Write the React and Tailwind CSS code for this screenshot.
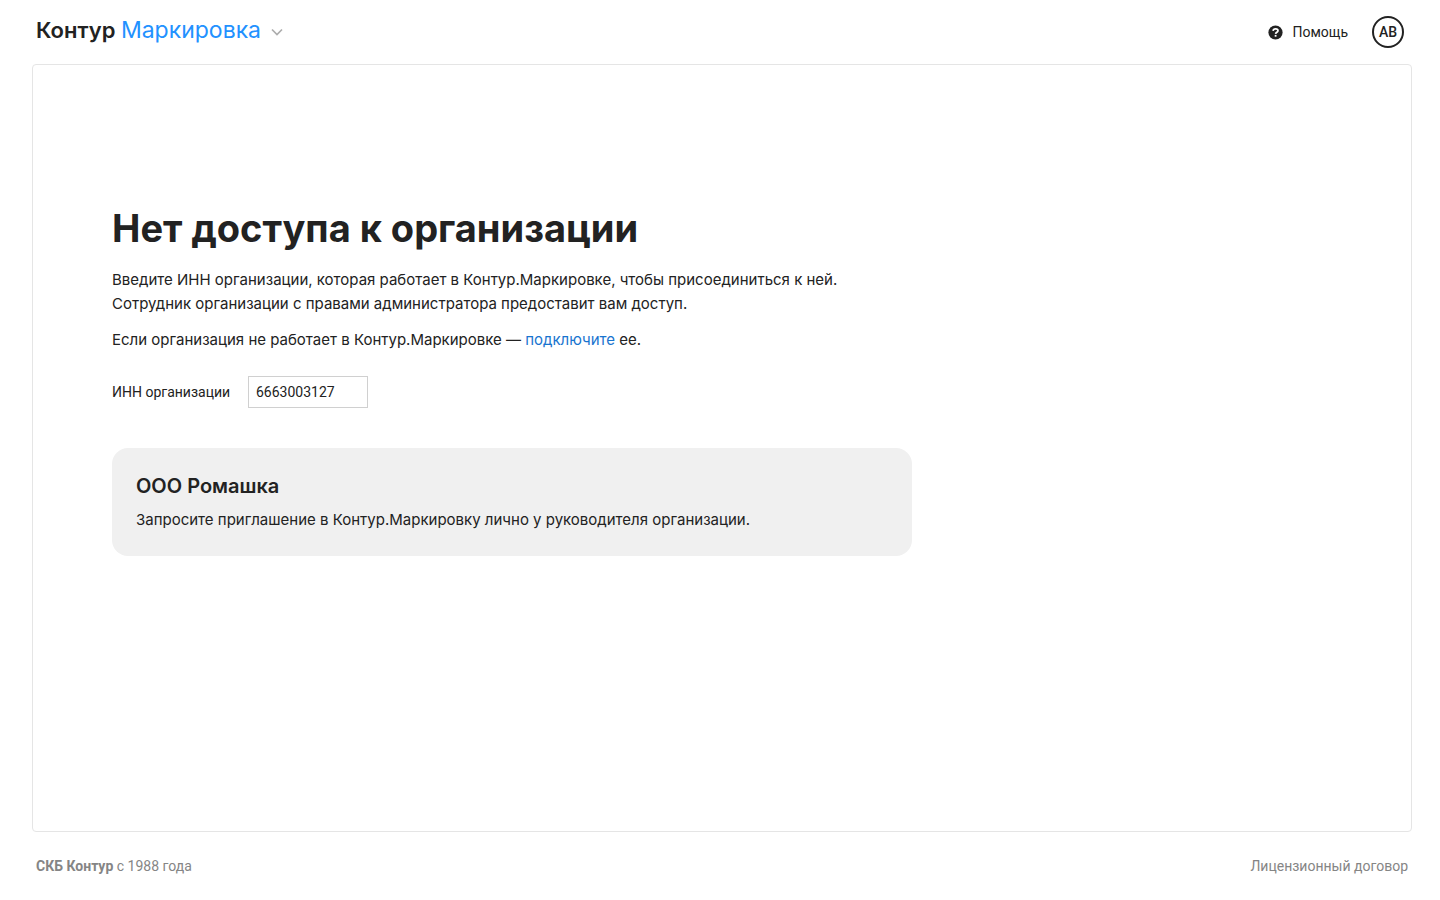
import React, { useState } from 'react';

const Logo = () => (
  <button type="button" className="flex items-center gap-2.5 cursor-pointer">
    <span className="pb-1 font-['Inter',sans-serif] text-[23px] leading-8 whitespace-nowrap text-[#222222]">
      <span className="text-[22px] font-semibold">Контур </span>
      <span className="text-[#2291ff]">Маркировка</span>
    </span>
    <svg className="h-3 w-3" viewBox="0 0 12 12" fill="none" aria-hidden="true">
      <path d="M1 3.5 L6 8.5 L11 3.5" stroke="#adadad" strokeWidth="1.7" />
    </svg>
  </button>
);

const HelpIcon = () => (
  <svg className="h-4 w-4" viewBox="0 0 16 16" fill="none" aria-hidden="true">
    <circle cx="7.5" cy="8.5" r="7.1" fill="#222222" />
    <path
      d="M5.1 6.9 C5.2 5.5 6.2 4.8 7.6 4.8 C9 4.8 10 5.6 10 6.7 C10 8.2 7.7 8.2 7.6 9.9"
      stroke="#ffffff"
      strokeWidth="1.7"
    />
    <rect x="6.7" y="10.9" width="1.8" height="1.8" fill="#ffffff" />
  </svg>
);

const Header = () => (
  <header className="flex h-16 items-center justify-between pl-1 pr-2">
    <Logo />
    <div className="flex items-center gap-6">
      <button type="button" className="flex items-center gap-2 text-sm cursor-pointer">
        <HelpIcon />
        Помощь
      </button>
      <button
        type="button"
        className="flex h-8 w-8 items-center justify-center rounded-full border-2 border-[#222222] text-sm font-medium cursor-pointer"
      >
        АВ
      </button>
    </div>
  </header>
);

const Footer = () => (
  <footer className="flex items-center justify-between px-1 py-6 text-sm text-[#858585]">
    <div>
      <span className="font-bold">СКБ Контур</span> с 1988 года
    </div>
    <a href="#license">Лицензионный договор</a>
  </footer>
);

const App = () => {
  const [inn, setInn] = useState('6663003127');

  return (
    <div className="flex min-h-screen flex-col bg-white pl-8 pr-7 font-['Roboto',sans-serif] text-[#222222]">
      <Header />

      <main className="flex-1 rounded border border-[#e5e5e5] px-[79px] py-[139px]">
        <h1 className="font-['Inter',sans-serif] text-[38px] leading-[48px] font-bold">
          Нет доступа к организации
        </h1>

        <div className="mt-4 space-y-3 font-['Inter',sans-serif] text-[15px] leading-6">
          <p>
            Введите ИНН организации, которая работает в Контур.Маркировке, чтобы присоединиться к ней.
            <br />
            Сотрудник организации с правами администратора предоставит вам доступ.
          </p>
          <p>
            Если организация не работает в Контур.Маркировке —{' '}
            <a href="#connect" className="text-[#1874cf]">подключите</a> ее.
          </p>
        </div>

        <div className="mt-6 flex items-center text-sm">
          <label htmlFor="inn" className="w-34">ИНН организации</label>
          <input
            id="inn"
            type="text"
            value={inn}
            onChange={(e) => setInn(e.target.value)}
            className="h-8 w-30 border border-[#d0d0d0] px-[7px] outline-none"
          />
        </div>

        <section className="mt-10 max-w-[800px] rounded-2xl bg-[#f0f0f0] p-6 font-['Inter',sans-serif]">
          <h2 className="text-xl leading-7 font-semibold">ООО Ромашка</h2>
          <p className="mt-2 text-[15px] leading-6">
            Запросите приглашение в Контур.Маркировку лично у руководителя организации.
          </p>
        </section>
      </main>

      <Footer />
    </div>
  );
};

export default App;
